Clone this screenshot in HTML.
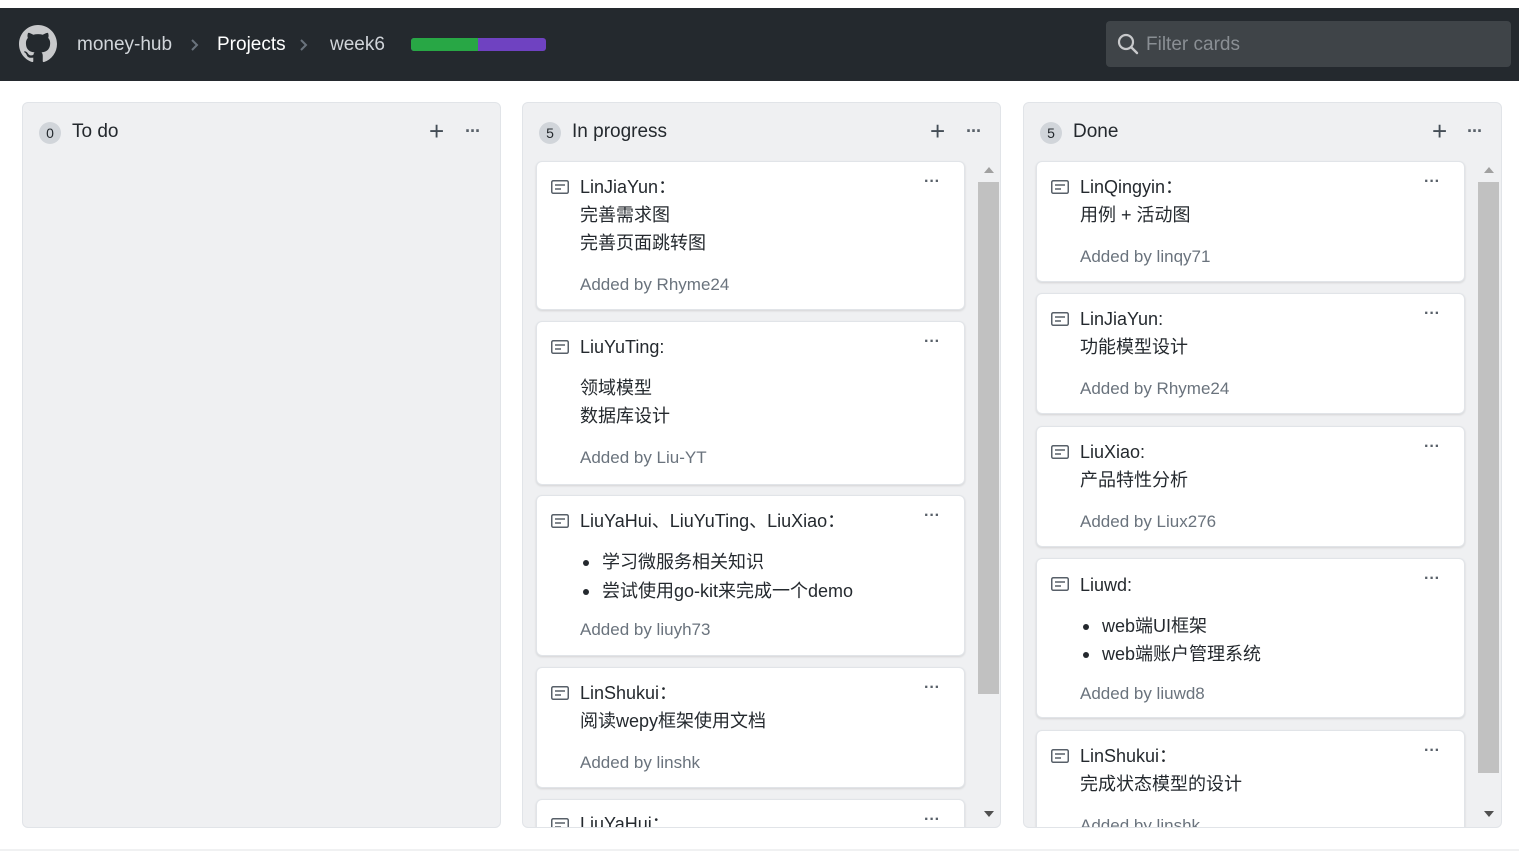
<!DOCTYPE html>
<html><head><meta charset="utf-8"><style>
*{margin:0;padding:0;box-sizing:border-box}
html,body{width:1519px;height:851px;overflow:hidden}
body{background:#fff;font-family:"Liberation Sans","Noto Sans CJK SC",sans-serif;position:relative;color:#24292e}
.hdr{position:absolute;left:0;top:8px;width:1519px;height:73px;background:#24292e}
.a{position:absolute;white-space:nowrap}
.col{position:absolute;top:102px;width:479px;height:726px;background:#eff0f2;border:1px solid #e1e4e8;border-radius:6px;overflow:hidden}
.badge{position:absolute;left:16px;top:19px;width:22px;height:22px;border-radius:11px;background:#d1d5da;font-size:14px;text-align:center;line-height:22px;color:#24292e}
.ct{position:absolute;left:49px;top:17px;font-size:19px;line-height:24px;color:#24292e}
.plus{position:absolute;top:14px;font-size:26px;line-height:28px;color:#444d56}
.dots{position:absolute;font-size:18px;letter-spacing:-1px;color:#586069;font-weight:bold}
.card{position:absolute;width:429px;background:#fff;border:1px solid #e1e4e8;border-radius:6px;box-shadow:0 1px 2px rgba(0,0,0,.12);overflow:hidden}
.card .l{position:absolute;left:43px;font-size:18px;line-height:28px;color:#24292e;white-space:nowrap}
.card .g{color:#6a737d;font-size:17px}
.card .b{left:65px}
.card .b:before{content:"";position:absolute;left:-19px;top:12px;width:6px;height:6px;border-radius:3px;background:#24292e}
.card svg.ic{position:absolute;left:14px;top:18px}
.card .d{position:absolute;left:387px;top:11px;font-size:16px;color:#586069;font-weight:bold}
.sb{position:absolute;width:21px;background:#c1c1c1}
.arr{position:absolute;width:0;height:0;border-left:5px solid transparent;border-right:5px solid transparent}
</style></head><body>
<div class="hdr"></div>
<svg class="a" style="left:19px;top:25px" width="38" height="38" viewBox="0 0 16 16"><path fill="#c8c9cb" d="M8 0C3.58 0 0 3.58 0 8c0 3.54 2.29 6.53 5.47 7.59.4.07.55-.17.55-.38 0-.19-.01-.82-.01-1.49-2.01.37-2.53-.49-2.69-.94-.09-.23-.48-.94-.82-1.13-.28-.15-.68-.52-.01-.53.63-.01 1.08.58 1.23.82.72 1.21 1.87.87 2.33.66.07-.52.28-.87.51-1.07-1.78-.2-3.64-.89-3.64-3.95 0-.87.31-1.59.82-2.15-.08-.2-.36-1.02.08-2.12 0 0 .67-.21 2.2.82.64-.18 1.32-.27 2-.27.68 0 1.36.09 2 .27 1.53-1.04 2.2-.82 2.2-.82.44 1.1.16 1.92.08 2.12.51.56.82 1.27.82 2.15 0 3.07-1.87 3.75-3.65 3.95.29.25.54.73.54 1.48 0 1.07-.01 1.93-.01 2.2 0 .21.15.46.55.38A8.013 8.013 0 0016 8c0-4.42-3.58-8-8-8z"/></svg>
<div class="a" style="left:77px;top:34px;font-size:19px;color:#d1d5da">money-hub</div>
<svg class="a" style="left:190px;top:38px" width="10" height="14" viewBox="0 0 10 14"><path d="M2 2l5 5-5 5" fill="none" stroke="#6a737d" stroke-width="2"/></svg>
<div class="a" style="left:217px;top:34px;font-size:19px;color:#fff">Projects</div>
<svg class="a" style="left:299px;top:38px" width="10" height="14" viewBox="0 0 10 14"><path d="M2 2l5 5-5 5" fill="none" stroke="#6a737d" stroke-width="2"/></svg>
<div class="a" style="left:330px;top:34px;font-size:19px;color:#d1d5da">week6</div>
<div class="a" style="left:411px;top:38px;width:135px;height:13px;border-radius:3px;overflow:hidden;background:#6f42c1"><div style="width:67px;height:13px;background:#28a745"></div></div>
<div class="a" style="left:1106px;top:21px;width:405px;height:46px;border-radius:4px;background:#3f4448"></div>
<svg class="a" style="left:1117px;top:33px" width="22" height="22" viewBox="0 0 22 22"><circle cx="9" cy="9" r="7" fill="none" stroke="#c8c9cb" stroke-width="2.2"/><path d="M14 14l6 6" stroke="#c8c9cb" stroke-width="2.4" stroke-linecap="round"/></svg>
<div class="a" style="left:1146px;top:34px;font-size:19px;color:#8a8f94">Filter cards</div>

<div class="col" style="left:22px">
<div class="badge">0</div><div class="ct">To do</div>
<div class="plus" style="left:406px">+</div><div class="dots" style="left:442px;top:18px">···</div>
</div>

<div class="col" style="left:522px">
<div class="badge">5</div><div class="ct">In progress</div>
<div class="plus" style="left:407px">+</div><div class="dots" style="left:443px;top:18px">···</div>
<div class="arr" style="left:461px;top:64px;border-bottom:6px solid #a0a0a0"></div>
<div class="sb" style="left:455px;top:79px;height:512px"></div>
<div class="arr" style="left:461px;top:708px;border-top:6px solid #505050"></div>
</div>

<div class="col" style="left:1023px">
<div class="badge">5</div><div class="ct">Done</div>
<div class="plus" style="left:408px">+</div><div class="dots" style="left:443px;top:18px">···</div>
<div class="arr" style="left:460px;top:64px;border-bottom:6px solid #a0a0a0"></div>
<div class="sb" style="left:454px;top:79px;height:591px"></div>
<div class="arr" style="left:460px;top:708px;border-top:6px solid #505050"></div>
</div>

<div style="position:absolute;left:523px;top:103px;width:450px;height:724px;overflow:hidden">
<div class="card" style="left:13px;top:58px;height:149px">
<svg class="ic" width="18" height="14" viewBox="0 0 18 14"><rect x="0.75" y="0.75" width="16.5" height="12.5" rx="1.5" fill="none" stroke="#586069" stroke-width="1.5"/><path d="M4 5h10M4 9h6" stroke="#586069" stroke-width="1.5"/></svg>
<div class="d">···</div>
<div class="l" style="top:11px">LinJiaYun：</div>
<div class="l" style="top:39px">完善需求图</div>
<div class="l" style="top:67px">完善页面跳转图</div>
<div class="l g" style="top:109px">Added by Rhyme24</div>
</div>
<div class="card" style="left:13px;top:218px;height:164px">
<svg class="ic" width="18" height="14" viewBox="0 0 18 14"><rect x="0.75" y="0.75" width="16.5" height="12.5" rx="1.5" fill="none" stroke="#586069" stroke-width="1.5"/><path d="M4 5h10M4 9h6" stroke="#586069" stroke-width="1.5"/></svg>
<div class="d">···</div>
<div class="l" style="top:11px">LiuYuTing:</div>
<div class="l" style="top:52px">领域模型</div>
<div class="l" style="top:80px">数据库设计</div>
<div class="l g" style="top:122px">Added by Liu-YT</div>
</div>
<div class="card" style="left:13px;top:392px;height:161px">
<svg class="ic" width="18" height="14" viewBox="0 0 18 14"><rect x="0.75" y="0.75" width="16.5" height="12.5" rx="1.5" fill="none" stroke="#586069" stroke-width="1.5"/><path d="M4 5h10M4 9h6" stroke="#586069" stroke-width="1.5"/></svg>
<div class="d">···</div>
<div class="l" style="top:11px">LiuYaHui、LiuYuTing、LiuXiao：</div>
<div class="l b" style="top:52px">学习微服务相关知识</div>
<div class="l b" style="top:81px">尝试使用go-kit来完成一个demo</div>
<div class="l g" style="top:120px">Added by liuyh73</div>
</div>
<div class="card" style="left:13px;top:564px;height:121px">
<svg class="ic" width="18" height="14" viewBox="0 0 18 14"><rect x="0.75" y="0.75" width="16.5" height="12.5" rx="1.5" fill="none" stroke="#586069" stroke-width="1.5"/><path d="M4 5h10M4 9h6" stroke="#586069" stroke-width="1.5"/></svg>
<div class="d">···</div>
<div class="l" style="top:11px">LinShukui：</div>
<div class="l" style="top:39px">阅读wepy框架使用文档</div>
<div class="l g" style="top:81px">Added by linshk</div>
</div>
<div class="card" style="left:13px;top:696px;height:100px">
<svg class="ic" width="18" height="14" viewBox="0 0 18 14"><rect x="0.75" y="0.75" width="16.5" height="12.5" rx="1.5" fill="none" stroke="#586069" stroke-width="1.5"/><path d="M4 5h10M4 9h6" stroke="#586069" stroke-width="1.5"/></svg>
<div class="d">···</div>
<div class="l" style="top:10px">LiuYaHui：</div>
</div>
</div>

<div style="position:absolute;left:1024px;top:103px;width:450px;height:724px;overflow:hidden">
<div class="card" style="left:12px;top:58px;height:121px">
<svg class="ic" width="18" height="14" viewBox="0 0 18 14"><rect x="0.75" y="0.75" width="16.5" height="12.5" rx="1.5" fill="none" stroke="#586069" stroke-width="1.5"/><path d="M4 5h10M4 9h6" stroke="#586069" stroke-width="1.5"/></svg>
<div class="d">···</div>
<div class="l" style="top:11px">LinQingyin：</div>
<div class="l" style="top:39px">用例 + 活动图</div>
<div class="l g" style="top:81px">Added by linqy71</div>
</div>
<div class="card" style="left:12px;top:190px;height:121px">
<svg class="ic" width="18" height="14" viewBox="0 0 18 14"><rect x="0.75" y="0.75" width="16.5" height="12.5" rx="1.5" fill="none" stroke="#586069" stroke-width="1.5"/><path d="M4 5h10M4 9h6" stroke="#586069" stroke-width="1.5"/></svg>
<div class="d">···</div>
<div class="l" style="top:11px">LinJiaYun:</div>
<div class="l" style="top:39px">功能模型设计</div>
<div class="l g" style="top:81px">Added by Rhyme24</div>
</div>
<div class="card" style="left:12px;top:323px;height:121px">
<svg class="ic" width="18" height="14" viewBox="0 0 18 14"><rect x="0.75" y="0.75" width="16.5" height="12.5" rx="1.5" fill="none" stroke="#586069" stroke-width="1.5"/><path d="M4 5h10M4 9h6" stroke="#586069" stroke-width="1.5"/></svg>
<div class="d">···</div>
<div class="l" style="top:11px">LiuXiao:</div>
<div class="l" style="top:39px">产品特性分析</div>
<div class="l g" style="top:81px">Added by Liux276</div>
</div>
<div class="card" style="left:12px;top:455px;height:160px">
<svg class="ic" width="18" height="14" viewBox="0 0 18 14"><rect x="0.75" y="0.75" width="16.5" height="12.5" rx="1.5" fill="none" stroke="#586069" stroke-width="1.5"/><path d="M4 5h10M4 9h6" stroke="#586069" stroke-width="1.5"/></svg>
<div class="d">···</div>
<div class="l" style="top:12px">Liuwd:</div>
<div class="l b" style="top:53px">web端UI框架</div>
<div class="l b" style="top:81px">web端账户管理系统</div>
<div class="l g" style="top:121px">Added by liuwd8</div>
</div>
<div class="card" style="left:12px;top:627px;height:140px">
<svg class="ic" width="18" height="14" viewBox="0 0 18 14"><rect x="0.75" y="0.75" width="16.5" height="12.5" rx="1.5" fill="none" stroke="#586069" stroke-width="1.5"/><path d="M4 5h10M4 9h6" stroke="#586069" stroke-width="1.5"/></svg>
<div class="d">···</div>
<div class="l" style="top:11px">LinShukui：</div>
<div class="l" style="top:39px">完成状态模型的设计</div>
<div class="l g" style="top:81px">Added by linshk</div>
</div>
</div>
<div class="a" style="left:0;top:849px;width:1519px;height:2px;background:#f0f1f2"></div>
</body></html>
